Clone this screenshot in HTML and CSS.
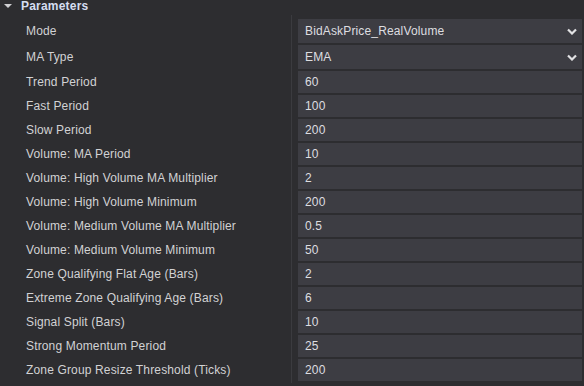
FILE: index.html
```html
<!DOCTYPE html>
<html lang="en">

<head>
    <meta charset="UTF-8" />
    <meta name="viewport" content="width=device-width, initial-scale=1.0" />
    <link rel="stylesheet" href="styles.css">
    <title>Parameters</title>
</head>

<body>
    <div class="panel">
        <div class="section-head">
            <svg class="caret" width="8" height="6" viewBox="0 0 8 6"><polygon points="0,1 8,1 4,5" fill="#cfcfd2" /></svg>
            <span>Parameters</span>
        </div>
        <div class="props">
            <div class="labels">
                <div class="label tall">Mode</div>
                <div class="label tall">MA Type</div>
                <div class="label">Trend Period</div>
                <div class="label">Fast Period</div>
                <div class="label">Slow Period</div>
                <div class="label">Volume: MA Period</div>
                <div class="label">Volume: High Volume MA Multiplier</div>
                <div class="label">Volume: High Volume Minimum</div>
                <div class="label">Volume: Medium Volume MA Multiplier</div>
                <div class="label">Volume: Medium Volume Minimum</div>
                <div class="label">Zone Qualifying Flat Age (Bars)</div>
                <div class="label">Extreme Zone Qualifying Age (Bars)</div>
                <div class="label">Signal Split (Bars)</div>
                <div class="label">Strong Momentum Period</div>
                <div class="label">Zone Group Resize Threshold (Ticks)</div>
            </div>
            <div class="divider"></div>
            <div class="values">
                <div class="cell tall">
                    <div class="box select"><span>BidAskPrice_RealVolume</span>
                        <svg width="10" height="7" viewBox="0 0 10 7"><polyline points="1,1.5 5,5.5 9,1.5" fill="none" stroke="#e2e2e4" stroke-width="2.2" /></svg>
                    </div>
                </div>
                <div class="cell tall">
                    <div class="box select"><span>EMA</span>
                        <svg width="10" height="7" viewBox="0 0 10 7"><polyline points="1,1.5 5,5.5 9,1.5" fill="none" stroke="#e2e2e4" stroke-width="2.2" /></svg>
                    </div>
                </div>
                <div class="cell"><div class="box">60</div></div>
                <div class="cell"><div class="box">100</div></div>
                <div class="cell"><div class="box">200</div></div>
                <div class="cell"><div class="box">10</div></div>
                <div class="cell"><div class="box">2</div></div>
                <div class="cell"><div class="box">200</div></div>
                <div class="cell"><div class="box">0.5</div></div>
                <div class="cell"><div class="box">50</div></div>
                <div class="cell"><div class="box">2</div></div>
                <div class="cell"><div class="box">6</div></div>
                <div class="cell"><div class="box">10</div></div>
                <div class="cell"><div class="box">25</div></div>
                <div class="cell"><div class="box">200</div></div>
            </div>
        </div>
    </div>
</body>

</html>
```

FILE: styles.css
```css
* {
    margin: 0;
    padding: 0;
    box-sizing: border-box;
}

body {
    background-color: #2d2d30;
    font-family: 'Liberation Sans', Arial, sans-serif;
    font-size: 12px;
    letter-spacing: 0.15px;
    color: #d2d2d4;
    width: 584px;
    height: 386px;
    overflow: hidden;
}

.section-head {
    display: flex;
    align-items: center;
    height: 15px;
    padding-left: 4px;
    padding-bottom: 3px;
}

.caret {
    margin-right: 9px;
}

.section-head span {
    font-weight: bold;
    color: #d5ddf0;
    letter-spacing: 0.2px;
}

.props {
    display: flex;
}

.labels {
    width: 291px;
    padding-top: 3px;
}

.label {
    height: 24px;
    line-height: 24px;
    padding-left: 26px;
    white-space: nowrap;
}

.label.tall {
    height: 26px;
    line-height: 26px;
}

.divider {
    width: 1px;
    background-color: #3b3b3f;
}

.values {
    flex: 1;
    padding: 3px 2px 1px 6px;
}

.cell {
    height: 24px;
    padding: 1px 0;
}

.cell.tall {
    height: 26px;
}

.box {
    height: 100%;
    background-color: #3d3d43;
    color: #dedee0;
    padding-left: 7px;
    display: flex;
    align-items: center;
}

.select {
    justify-content: space-between;
    padding-right: 5px;
}
```
